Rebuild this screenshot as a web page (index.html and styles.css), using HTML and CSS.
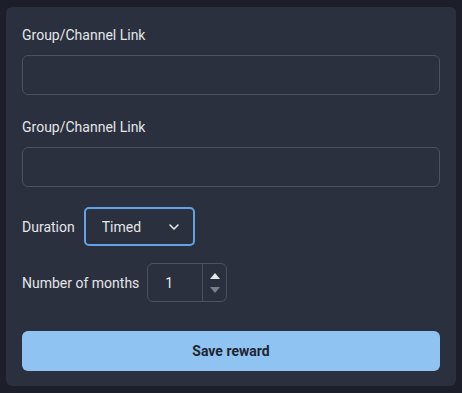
FILE: index.html
```html
<!DOCTYPE html>
<html lang="en">
<head>
  <meta charset="UTF-8" />
  <meta name="viewport" content="width=device-width, initial-scale=1.0" />
  <title>Reward</title>
  <link rel="stylesheet" href="styles.css">
</head>
<body>
  <form class="card">
    <div class="field">
      <label class="label" for="link-1">Group/Channel Link</label>
      <input class="text-input" id="link-1" type="text">
    </div>
    <div class="field">
      <label class="label" for="link-2">Group/Channel Link</label>
      <input class="text-input" id="link-2" type="text">
    </div>
    <div class="row row-duration">
      <label class="label" for="duration">Duration</label>
      <div class="select-wrap">
        <select class="select" id="duration">
          <option>Timed</option>
          <option>Permanent</option>
        </select>
        <svg class="chevron" width="12" height="8" viewBox="0 0 12 8"><path d="M2 2l4 4 4-4" fill="none" stroke="#e6e8ec" stroke-width="1.6" stroke-linecap="round" stroke-linejoin="round"/></svg>
      </div>
    </div>
    <div class="row row-months">
      <label class="label" for="months">Number of months</label>
      <div class="number">
        <input class="number-input" id="months" type="text" value="1">
        <div class="spinner">
          <span class="arrow up"></span>
          <span class="arrow down"></span>
        </div>
      </div>
    </div>
    <button type="button" class="save">Save reward</button>
  </form>
</body>
</html>
```

FILE: styles.css
```css
:root { --page: #1c1f29; --card: #2a303d; --line: #4b515d; --text: #e4e6ea; --blue: #8fc3f2; }
* { margin: 0; padding: 0; box-sizing: border-box; }
body {
  background: var(--page);
  font-family: Roboto, "Liberation Sans", sans-serif;
  color: var(--text);
  padding: 7px 6px;
}
.card {
  background: var(--card);
  border-radius: 6px;
  padding: 18px 16px 15px;
  display: flex; flex-direction: column;
  height: 379px;
}
.label { font-size: 14px; line-height: 20px; }
.field { display: flex; flex-direction: column; gap: 10px; margin-bottom: 22px; }
.field + .field { margin-bottom: 20px; }
.text-input {
  height: 40px; width: 100%;
  background: transparent;
  border: 1px solid var(--line); border-radius: 6px;
  color: var(--text); font: inherit; padding: 0 12px;
}
.row { display: flex; align-items: center; }
.row-duration { gap: 9px; margin-bottom: 17px; }
.select-wrap { position: relative; }
.select {
  appearance: none;
  width: 111px; height: 39px;
  background: transparent;
  border: 2px solid #62a3e8; border-radius: 5px;
  color: var(--text); font: inherit; font-size: 14px;
  padding: 0 0 0 16px;
  outline: none;
}
.chevron { position: absolute; right: 15px; top: 16px; pointer-events: none; }
.row-months { gap: 8px; margin-bottom: 29px; }
.number {
  display: flex;
  width: 80px; height: 39px;
  border: 1px solid var(--line); border-radius: 6px;
}
.number-input {
  width: 54px; background: transparent; border: none;
  color: var(--text); font: inherit; font-size: 14px;
  padding-left: 17px; outline: none;
}
.spinner {
  flex: 1;
  border-left: 1px solid var(--line);
  display: flex; flex-direction: column; align-items: center; justify-content: center; gap: 8px;
}
.arrow { width: 0; height: 0; border-left: 5px solid transparent; border-right: 5px solid transparent; }
.arrow.up { border-bottom: 6px solid #e4e6ea; }
.arrow.down { border-top: 6px solid #7a808b; }
.save {
  height: 40px; width: 100%;
  background: var(--blue); color: #1f2531;
  border: none; border-radius: 6px;
  font: inherit; font-size: 14px; font-weight: 700;
  cursor: pointer;
}
```
